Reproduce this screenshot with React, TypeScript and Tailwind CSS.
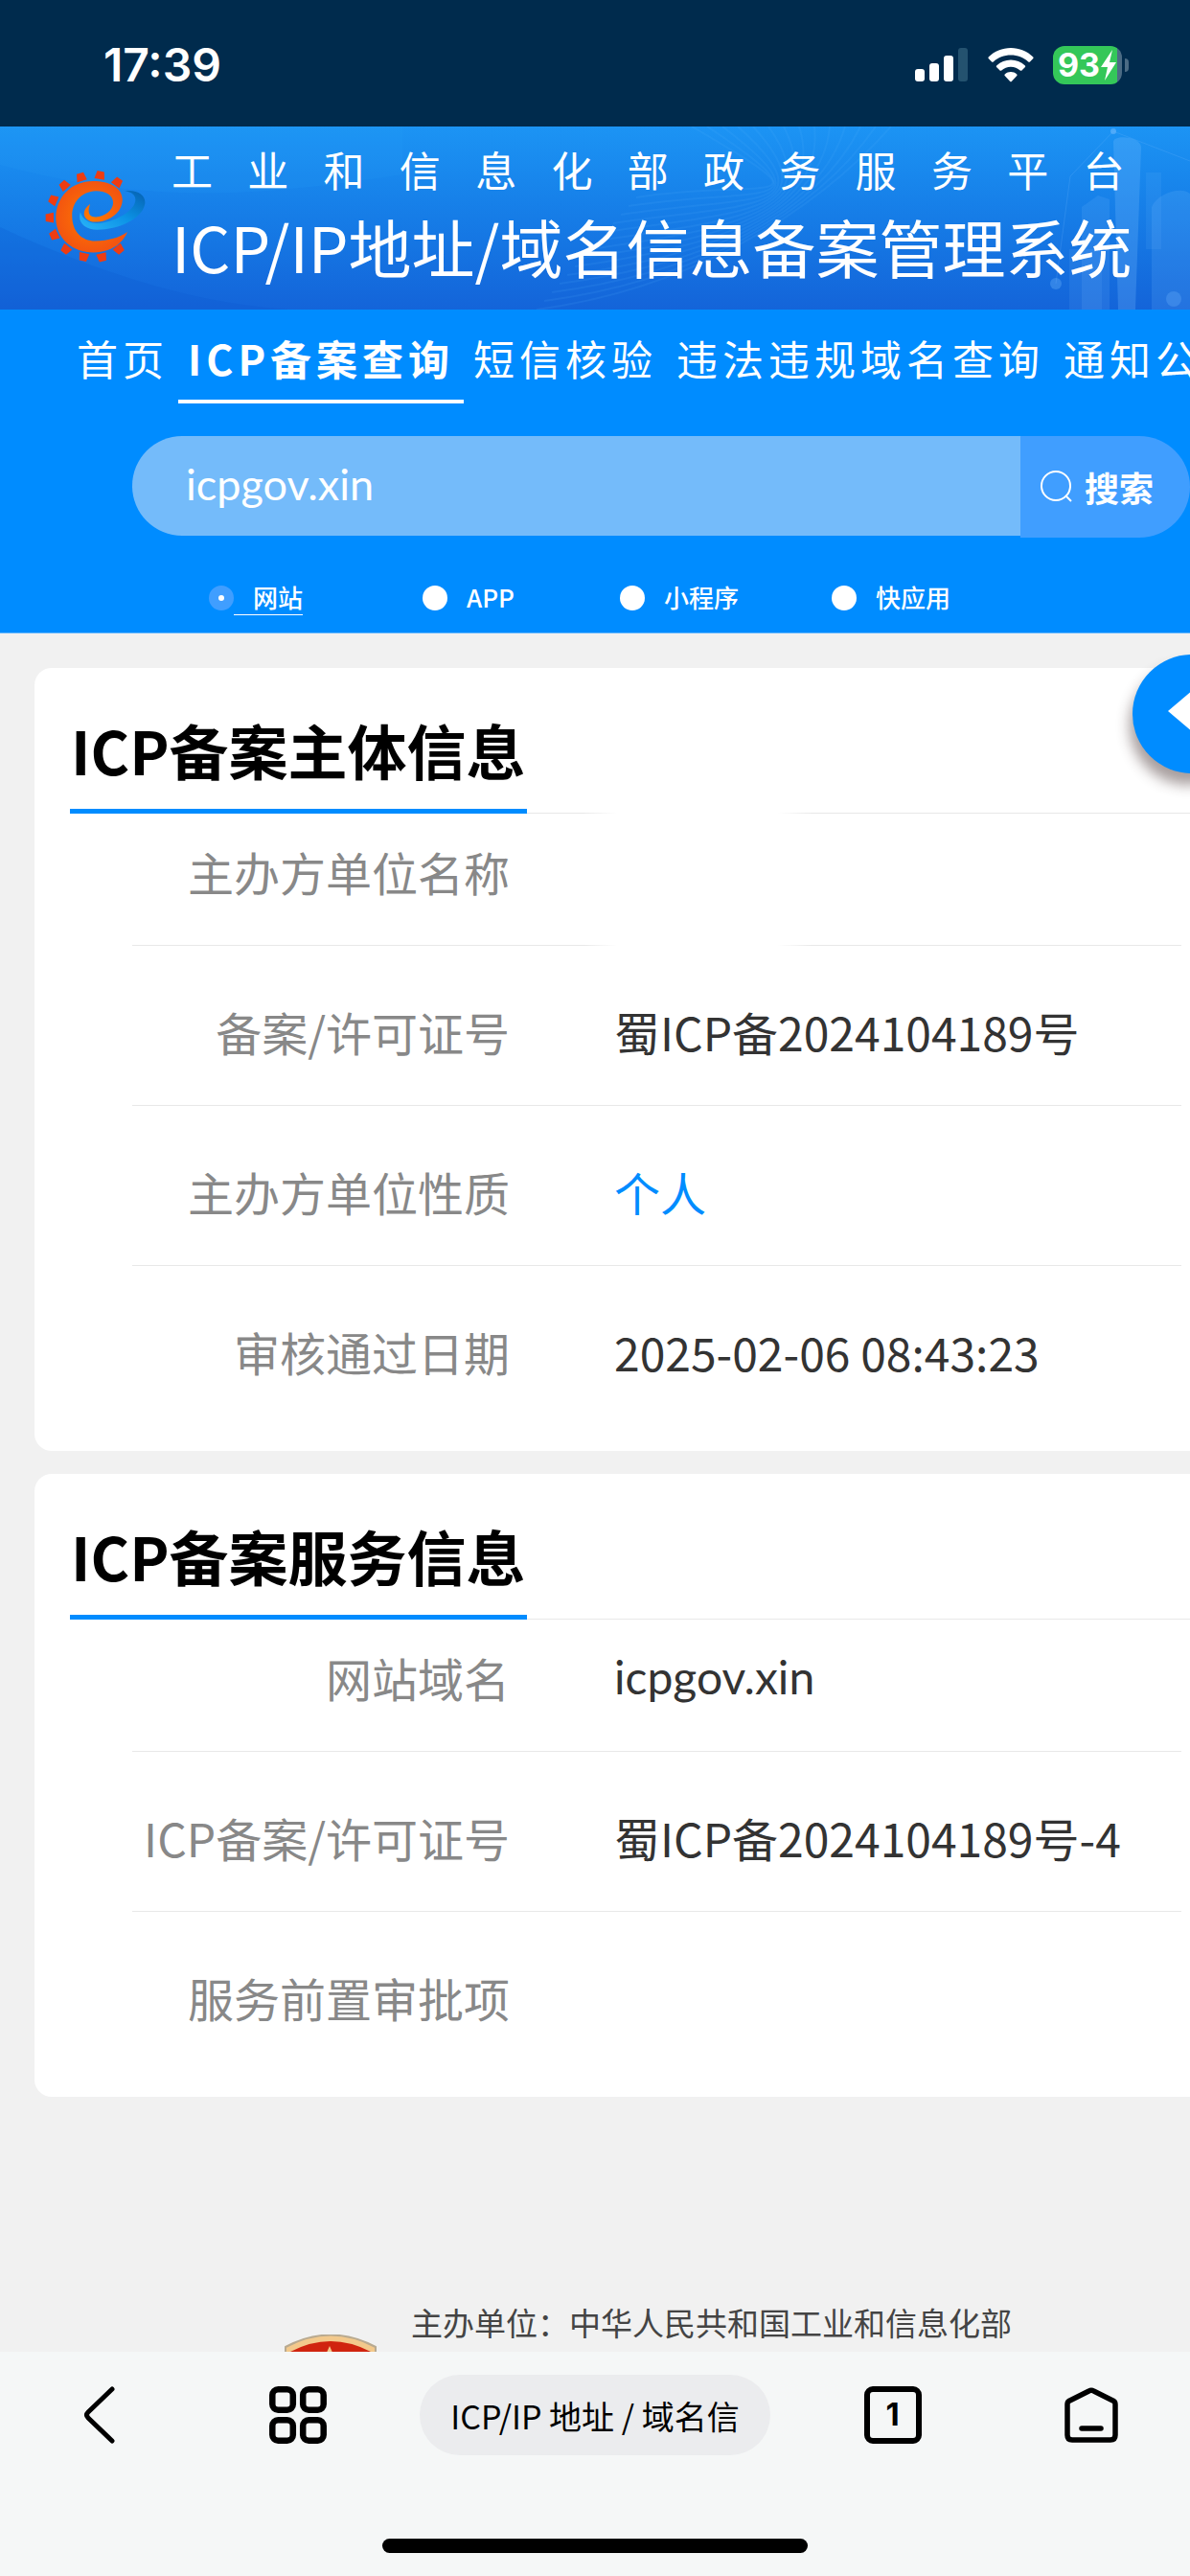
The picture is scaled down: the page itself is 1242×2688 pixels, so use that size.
import type { ReactNode } from 'react'

interface InfoRow {
  label: string
  value: ReactNode
  masked?: boolean
}

const navItems = ['首页', 'ICP备案查询', '短信核验', '违法违规域名查询', '通知公告']

const searchTypes = ['网站', 'APP', '小程序', '快应用']

const subjectRows: InfoRow[] = [
  { label: '主办方单位名称', value: '', masked: true },
  { label: '备案/许可证号', value: '蜀ICP备2024104189号' },
  { label: '主办方单位性质', value: <span className="text-[#008cff]">个人</span> },
  { label: '审核通过日期', value: '2025-02-06 08:43:23' },
]

const serviceRows: InfoRow[] = [
  { label: '网站域名', value: <span className="block font-['Lato']">icpgov.xin</span> },
  { label: 'ICP备案/许可证号', value: '蜀ICP备2024104189号-4' },
  { label: '服务前置审批项', value: '' },
]

const gearTeeth = [
  [145, 62],
  [205, 56],
  [260, 78],
  [92, 88],
  [57, 134],
  [46, 190],
  [60, 245],
  [97, 290],
  [153, 314],
  [211, 315],
  [265, 290],
]

function StatusBar() {
  return (
    <div className="flex h-[132px] shrink-0 items-center justify-between bg-[#002b4d] pt-1 pr-16 pl-[108px] text-white">
      <time className="font-['Inter'] text-5xl font-semibold">17:39</time>
      <div className="flex items-center gap-5 pb-px">
        <svg width="56" height="36" viewBox="0 0 56 36" fill="#fff">
          <rect x="0" y="22" width="10" height="13" rx="3" />
          <rect x="15" y="16" width="10" height="19" rx="3" />
          <rect x="30" y="8" width="10" height="27" rx="3" />
          <rect x="45" y="0" width="10" height="35" rx="3" fill="#24526f" />
        </svg>
        <svg width="48" height="36" viewBox="0 0 48 36" fill="#fff">
          <path d="M24 0C33 0 41 3.500 47 9.200c.8.800.8 1.400.1 2.100l-2.900 3c-.7.700-1.300.7-2 .1C37.300 10 31 7.500 24 7.500S10.700 10 5.800 14.400c-.7.600-1.300.6-2-.1l-2.900-3c-.7-.7-.7-1.300.1-2.100C7 3.500 15 0 24 0Z" />
          <path d="M24 12.500c5.600 0 10.700 2.200 14.600 5.700.8.800.8 1.400.1 2.100l-3 3c-.7.700-1.300.7-2 .1-2.600-2.300-6-3.700-9.700-3.700s-7.100 1.400-9.700 3.700c-.7.600-1.300.6-2-.1l-3-3c-.7-.7-.7-1.300.1-2.100 3.900-3.500 9-5.700 14.600-5.700Z" />
          <path d="M24 25c2.300 0 4.400.8 6 2.200.8.700.8 1.300.1 2.100l-5.100 5.400c-.6.700-1.400.7-2 0l-5.100-5.400c-.7-.8-.7-1.400.1-2.100 1.600-1.400 3.700-2.200 6-2.200Z" />
        </svg>
        <div className="flex items-center gap-[3px]">
          <div className="flex h-10 w-[72px] items-center justify-center rounded-xl bg-linear-to-r from-[#34c759] from-93% to-[#4b6b84] to-93%">
            <span className="font-['Inter'] text-[34px] font-bold">93</span>
            <svg width="18" height="32" viewBox="0 0 18 32" fill="#fff">
              <path d="M13 0 1 18h7L5 32 17 13h-7Z" />
            </svg>
          </div>
          <div className="h-3.5 w-1 rounded-r-full bg-[#4b6b84]" />
        </div>
      </div>
    </div>
  )
}

function Logo() {
  return (
    <svg className="shrink-0" width="107" height="103" viewBox="30 30 320 310">
      <defs>
        <linearGradient id="swoosh" x1="0" y1="1" x2="1" y2="0">
          <stop offset="0" stopColor="#2ab4f8" />
          <stop offset="0.5" stopColor="#0c93e6" />
          <stop offset="1" stopColor="#0560b0" />
        </linearGradient>
        <radialGradient id="gear">
          <stop offset="0" stopColor="#ff7a00" />
          <stop offset="1" stopColor="#f35510" />
        </radialGradient>
      </defs>
      {gearTeeth.map(([x, y]) => (
        <path
          key={`${x}-${y}`}
          d="M-13 -16 12 -11 12 11 -13 16Z"
          fill="#ee3c12"
          transform={`translate(${x} ${y}) rotate(${(Math.atan2(y - 188, x - 180) * 180) / Math.PI})`}
        />
      ))}
      <path
        d="M282 106C325 100 352 122 345 150 335 195 262 228 196 228 158 228 132 204 143 172 150 196 172 210 206 207 262 200 328 160 314 124 308 112 296 108 282 106Z"
        fill="url(#swoosh)"
      />
      <path
        d="M291 235C274 276 232 299 184 299 114 299 66 252 66 190 66 124 116 75 182 75 238 75 276 98 275 135 273 175 232 203 190 203 154 203 140 172 174 147 164 172 170 189 192 188 220 186 246 166 246 142 245 118 222 106 192 106 146 108 117 142 117 184 117 232 146 263 190 263 232 263 268 252 291 235Z"
        fill="url(#gear)"
      />
    </svg>
  )
}

function BannerArt() {
  return (
    <svg
      className="absolute inset-0 h-full w-full"
      viewBox="0 0 1242 191"
      preserveAspectRatio="none"
      fill="none"
      aria-hidden="true"
    >
      <path d="M0 40C150 80 260 75 420 50L420 0H0Z" fill="#2ba0f8" opacity="0.15" />
      <path d="M0 105C130 165 220 185 300 191H0Z" fill="#0b55cf" opacity="0.2" />
      {Array.from({ length: 14 }).map((_, i) => (
        <path
          key={i}
          d={`M${560 + i * 8} ${191 - i * 9}C${720 + i * 6} ${170 - i * 9} ${850 + i * 2} 90 ${930 - i * 16} 0`}
          stroke="#5ab8ff"
          strokeWidth="2"
          opacity="0.12"
        />
      ))}
      <g fill="#7cc0ff">
        <path d="M1162 16c0-8 29-6 29 6l-6 169h-18Z" opacity="0.25" />
        <path d="M1129 84 1146 72l12 4v115h-29Z" opacity="0.14" />
        <path d="M1202 84c6-14 30-22 40-14v121h-40Z" opacity="0.16" />
        <path d="M1116 128h34v63h-34Z" opacity="0.12" />
        <path d="M1196 48h16v80h-16Z" opacity="0.1" />
        <circle cx="1102" cy="164" r="6" opacity="0.3" />
        <circle cx="1162" cy="5" r="3" opacity="0.5" />
        <circle cx="1225" cy="180" r="8" opacity="0.25" />
      </g>
      <path d="M1102 164 1117 52 1162 5 1242 36" stroke="#7cc0ff" opacity="0.2" />
    </svg>
  )
}

function Banner() {
  return (
    <header className="relative h-[191px] bg-linear-to-b from-[#1c94f4] to-[#1464d9]">
      <BannerArt />
      <div className="relative flex items-start gap-[26px] pt-3.5 pl-[46px] whitespace-nowrap text-white">
        <div className="pt-7">
          <Logo />
        </div>
        <div className="flex w-fit flex-col gap-1.5">
          <p className="pr-2 text-[43px] leading-[60px] text-justify [text-align-last:justify]">
            工业和信息化部政务服务平台
          </p>
          <h1 className="text-[66px] leading-[88px]">ICP/IP地址/域名信息备案管理系统</h1>
        </div>
      </div>
    </header>
  )
}

function SearchPanel() {
  return (
    <section className="border-b border-[#66b8ff] bg-[#008cff] pt-5 pb-[18px] text-white">
      <nav className="flex pl-[70px] text-[43px] leading-[60px] tracking-[5px] whitespace-nowrap">
        {navItems.map((item, index) => (
          <a
            key={item}
            href="#"
            className={
              index === 1
                ? 'border-b-4 border-white px-2.5 pb-3.5 font-bold'
                : 'border-b-4 border-transparent px-2.5 pb-3.5'
            }
          >
            {item}
          </a>
        ))}
      </nav>

      <form className="mt-[34px] flex items-start pl-[138px]" onSubmit={(e) => e.preventDefault()}>
        <input
          type="text"
          aria-label="搜索内容"
          defaultValue="icpgov.xin"
          className="h-[104px] min-w-0 flex-1 rounded-l-full bg-[#74bbfa] pb-1 pl-14 font-['Lato'] text-[45px] text-white outline-none"
        />
        <button
          type="submit"
          className="flex h-[106px] w-[177px] items-center gap-3 rounded-r-full bg-[#409eff] pl-[21px] text-4xl font-bold"
        >
          <svg width="34" height="34" viewBox="0 0 34 34" fill="none" stroke="#fff" strokeWidth="2">
            <circle cx="16" cy="16" r="15" />
            <path d="m26 26 6 6" />
          </svg>
          搜索
        </button>
      </form>

      <fieldset className="mt-11 grid grid-cols-[223px_206px_221px_auto] pl-[218px] text-[26px] leading-9">
        {searchTypes.map((type, index) => (
          <label key={type} className="flex items-center font-medium">
            <input
              type="radio"
              name="search-type"
              defaultChecked={index === 0}
              className="size-[26px] appearance-none rounded-full bg-white checked:border-[10px] checked:border-[#409eff]"
            />
            <span className={index === 0 ? 'border-b border-white pl-5' : 'border-b border-transparent pl-5'}>
              {type}
            </span>
          </label>
        ))}
      </fieldset>
    </section>
  )
}

function InfoCard({ title, rows }: { title: string; rows: InfoRow[] }) {
  return (
    <section className="rounded-l-[18px] bg-white pb-[26px] pl-[37px]">
      <div className="border-b border-[#e8e8e8] pt-10">
        <h2 className="-mb-px w-fit border-b-[5px] border-[#008cff] px-px pb-[17px] text-[62px] leading-[90px] font-bold text-black">
          {title}
        </h2>
      </div>
      <dl className="pr-[9px] pl-[65px] text-5xl leading-[68px]">
        {rows.map((row) => (
          <div
            key={row.label}
            className="relative grid grid-cols-[394px_1fr] gap-[109px] border-b border-[#e8e8e8] pt-[55px] pb-[43px] first:pt-[26px] last:border-transparent"
          >
            <dt className="text-right whitespace-nowrap text-[#888]">{row.label}</dt>
            <dd className="text-[#333]">{row.value}</dd>
            {row.masked && (
              <div className="absolute -top-0.5 -bottom-0.5 left-[470px] w-[240px] bg-[linear-gradient(90deg,transparent,#fff_15%,#fff_85%,transparent)]" />
            )}
          </div>
        ))}
      </dl>
    </section>
  )
}

function Emblem() {
  return (
    <svg width="96" height="110" viewBox="0 0 96 110">
      <path d="M1 13Q48 -12 95 13V70Q90 95 48 109 6 95 1 70Z" fill="#f3c98c" stroke="#b9aa90" strokeWidth="2" />
      <path d="M6 18Q48 -4 90 18V68Q84 90 48 102 12 90 6 68Z" fill="#d0240f" />
      <path d="m47 12 4 9h10l-8 7 3 10-9-6-9 6 3-10-8-7h10Z" fill="#f3c98c" />
    </svg>
  )
}

function PageFooter() {
  return (
    <footer className="mt-[213px] flex items-start gap-9 pl-[297px]">
      <div className="shrink-0 pt-[35px]">
        <Emblem />
      </div>
      <p className="text-[33px] leading-[44px] whitespace-nowrap text-[#444]">
        主办单位：中华人民共和国工业和信息化部
      </p>
    </footer>
  )
}

function BrowserBar() {
  return (
    <div className="flex h-[234px] shrink-0 flex-col items-center justify-between bg-[#f5f7f7] pt-6 pb-6 text-black">
      <div className="grid w-full grid-cols-[207px_207px_1fr_207px_207px] items-center justify-items-center">
        <button type="button" aria-label="后退">
          <svg width="60" height="60" viewBox="0 0 60 60" fill="none" stroke="#000" strokeWidth="5" strokeLinecap="round">
            <path d="M43 3 18 27q-3 3 0 6l25 24" />
          </svg>
        </button>
        <button type="button" aria-label="菜单">
          <svg width="60" height="60" viewBox="0 0 60 60" fill="none" stroke="#000" strokeWidth="6.500">
            <rect x="3.300" y="3.300" width="21.500" height="21.500" rx="6" />
            <rect x="35.200" y="3.300" width="21.500" height="21.500" rx="6" />
            <rect x="3.300" y="35.200" width="21.500" height="21.500" rx="6" />
            <rect x="35.200" y="35.200" width="21.500" height="21.500" rx="6" />
          </svg>
        </button>
        <button
          type="button"
          className="h-[84px] rounded-full bg-[#ebecee] px-8 text-[34px] whitespace-nowrap"
        >
          ICP/IP 地址 / 域名信
        </button>
        <button
          type="button"
          aria-label="标签页"
          className="flex size-[60px] items-center justify-center rounded-[9px] border-6 border-black font-['Inter'] text-[33px] font-bold"
        >
          1
        </button>
        <button type="button" aria-label="主页">
          <svg width="60" height="60" viewBox="0 0 60 60" fill="none" stroke="#000" strokeWidth="5.500" strokeLinejoin="round">
            <path d="M27.500 5 6.500 15.500Q5 16.500 5 19V51q0 5 5 5H50q5 0 5-5V19q0-2.500-1.500-3.500L32.500 5q-2.500-1.500-5 0Z" />
            <path d="M20 44H40" strokeLinecap="round" />
          </svg>
        </button>
      </div>
      <div className="h-[15px] w-[444px] rounded-full bg-black" />
    </div>
  )
}

export default function App() {
  return (
    <div className="flex h-screen flex-col overflow-hidden bg-[#f1f1f1] font-['Noto_Sans_CJK_SC',sans-serif]">
      <StatusBar />
      <div className="relative flex-1 overflow-hidden">
        <Banner />
        <SearchPanel />
        <main className="flex flex-col gap-6 pt-9 pl-9">
          <InfoCard title="ICP备案主体信息" rows={subjectRows} />
          <InfoCard title="ICP备案服务信息" rows={serviceRows} />
        </main>
        <PageFooter />
        <button
          type="button"
          aria-label="展开"
          className="absolute top-[551px] -right-16 flex size-[124px] items-center rounded-full bg-[#008cff] pl-[37px] shadow-[-3px_12px_14px_rgba(60,40,40,0.45)]"
        >
          <svg width="40" height="68" viewBox="0 0 40 68" fill="#fff">
            <path d="M0 31 40 -3V65Z" />
          </svg>
        </button>
      </div>
      <BrowserBar />
    </div>
  )
}
